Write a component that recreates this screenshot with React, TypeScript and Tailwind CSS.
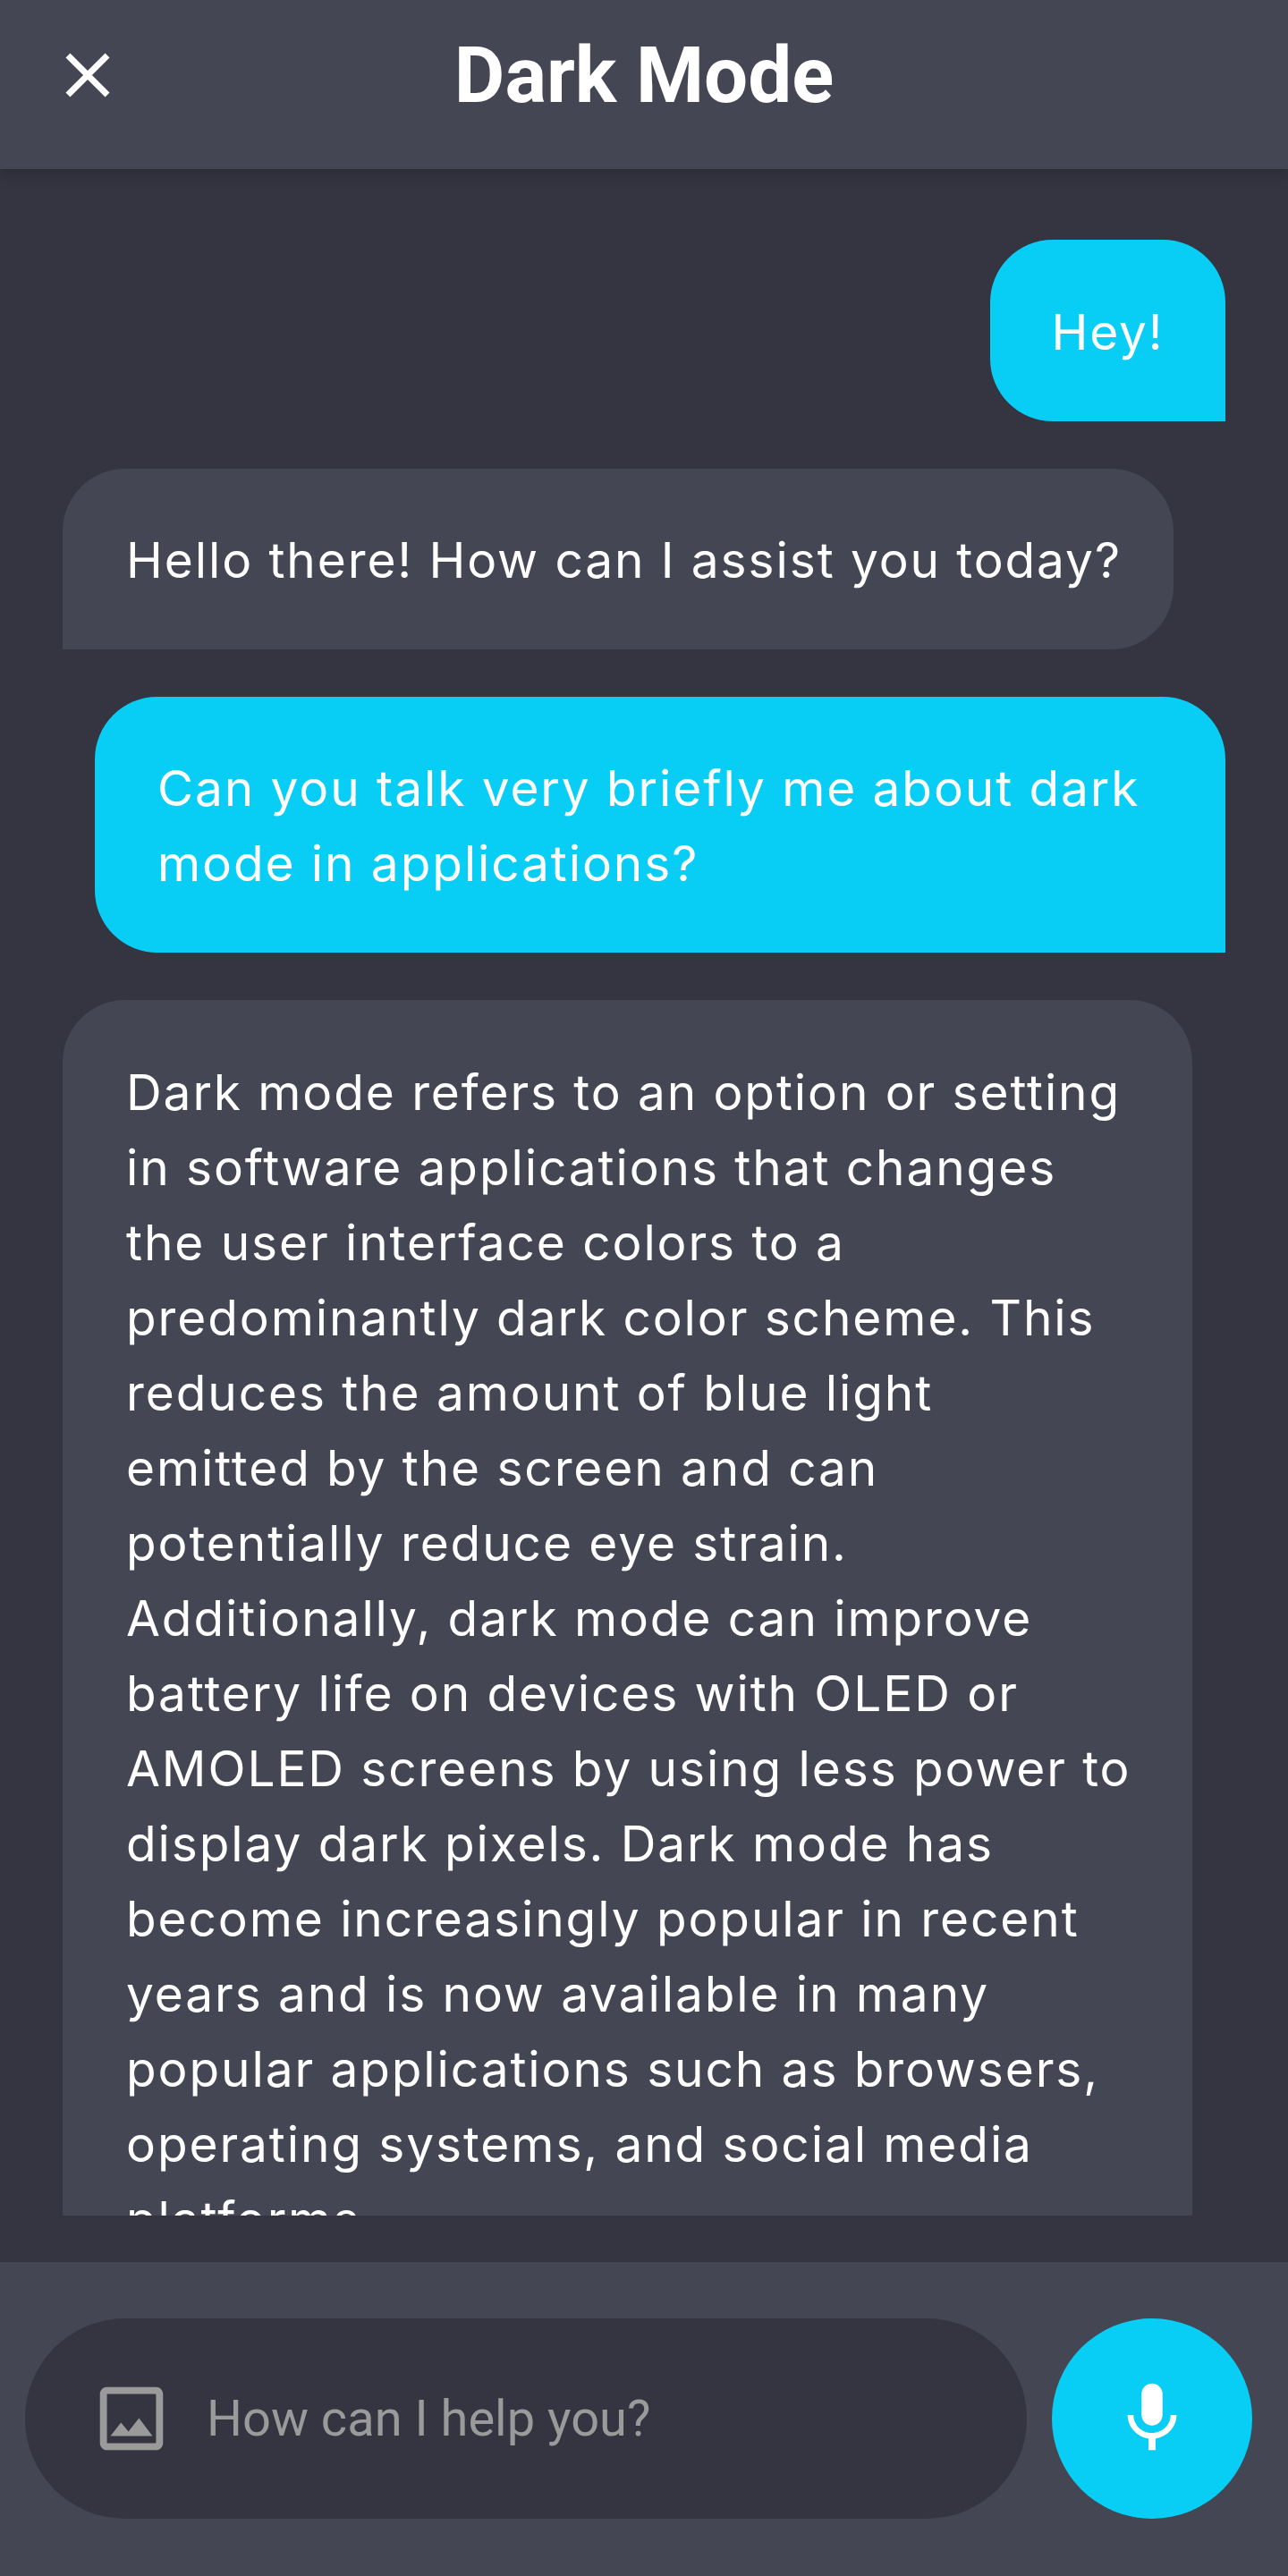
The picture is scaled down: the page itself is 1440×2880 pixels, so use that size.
import { FC } from "react";
import { MdClose, MdMic, MdOutlineImage } from "react-icons/md";

const answer = `Dark mode refers to an option or setting
in software applications that changes
the user interface colors to a
predominantly dark color scheme. This
reduces the amount of blue light
emitted by the screen and can
potentially reduce eye strain.
Additionally, dark mode can improve
battery life on devices with OLED or
AMOLED screens by using less power to
display dark pixels. Dark mode has
become increasingly popular in recent
years and is now available in many
popular applications such as browsers,
operating systems, and social media
platforms.`;

const App: FC = () => {
  return (
    <div className="h-[2880px] flex flex-col overflow-hidden bg-[#343541] text-white font-['Inter',sans-serif]">
      {/* Header */}
      <header className="relative z-10 h-[189px] shrink-0 bg-[#444654] shadow-[0_4px_16px_rgba(0,0,0,0.25)] flex items-start pt-[42px] pl-[56px]">
        <MdClose className="text-white text-[84px] shrink-0" />
        <h1 className="flex-1 pr-[140px] text-center font-['Roboto',sans-serif] font-bold text-[87px] leading-[84px]">
          Dark Mode
        </h1>
      </header>

      {/* Messages */}
      <main className="flex-1 min-h-0 pt-[79px] pb-[52px] pl-[70px] pr-[70px]">
        <div className="h-full overflow-hidden flex flex-col gap-[53px] text-[55px] leading-[84px] tracking-[1.9px]">
          <div className="self-end w-[263px] h-[203px] shrink-0 bg-[#08cef5] rounded-t-[70px] rounded-bl-[70px] flex items-center justify-center pt-[2px]">
            Hey!
          </div>
          <div className="self-start w-[1242px] h-[202px] shrink-0 bg-[#444654] rounded-t-[70px] rounded-br-[70px] flex items-center pl-[71px] pt-[2px] whitespace-nowrap">
            Hello there! How can I assist you today?
          </div>
          <div className="self-end w-[1264px] h-[286px] shrink-0 bg-[#08cef5] rounded-t-[70px] rounded-bl-[70px] pl-[70px] pt-[60px] whitespace-pre-line">
            {"Can you talk very briefly me about dark\nmode in applications?"}
          </div>
          <div className="self-start w-[1263px] shrink-0 bg-[#444654] rounded-t-[70px] pl-[71px] pt-[61px] whitespace-pre-line">
            {answer}
          </div>
        </div>
      </main>

      {/* Input bar */}
      <footer className="h-[351px] shrink-0 bg-[#444654] flex gap-[28px] pl-[28px] pt-[63px]">
        <div className="w-[1120px] h-[224px] bg-[#343541] rounded-full flex items-center pl-[72px] gap-[37px]">
          <MdOutlineImage className="text-[#9a9a9a] text-[94px] shrink-0" />
          <input
            placeholder="How can I help you?"
            className="flex-1 min-w-0 bg-transparent outline-none font-['Roboto',sans-serif] text-[56px] placeholder:text-[#9a9a9a]"
          />
        </div>
        <button className="w-[224px] h-[224px] rounded-full bg-[#08cef5] flex items-center justify-center">
          <MdMic className="text-white text-[94px]" />
        </button>
      </footer>
    </div>
  );
};

export default App;
